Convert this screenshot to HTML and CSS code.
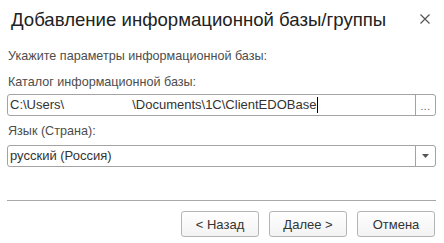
FILE: index.html
```html
<!DOCTYPE html>
<html lang="ru">
<head>
<meta charset="utf-8">
<link rel="stylesheet" href="styles.css">
</head>
<body>
<div class="dialog">
  <div class="header">
    <div class="title">Добавление информационной базы/группы</div>
    <svg class="close" width="10" height="10" viewBox="0 0 10 10"><path d="M0.5 0.5 L9.5 9.5 M9.5 0.5 L0.5 9.5" stroke="#555" stroke-width="1.2" fill="none"/></svg>
  </div>
  <div class="content">
    <div class="hint">Укажите параметры информационной базы:</div>
    <div class="label label-first">Каталог информационной базы:</div>
    <div class="field">
      <div class="field-text">C:\Users\<span class="masked"></span>\Documents\1C\ClientEDOBase<span class="caret"></span></div>
      <div class="field-btn"><span class="dots">...</span></div>
    </div>
    <div class="label">Язык (Страна):</div>
    <div class="field field-select">
      <div class="field-text">русский (Россия)</div>
      <div class="field-btn"><svg width="7" height="4" viewBox="0 0 7 4"><path d="M0 0 H7 L3.5 4 Z" fill="#555"/></svg></div>
    </div>
  </div>
  <div class="divider"></div>
  <div class="buttons">
    <button class="btn">&lt; Назад</button>
    <button class="btn">Далее &gt;</button>
    <button class="btn">Отмена</button>
  </div>
</div>
</body>
</html>
```
FILE: styles.css
```css
* { box-sizing: border-box; }
html, body { margin: 0; padding: 0; background: #fff; }
body { font-family: "Liberation Sans", Arial, sans-serif; color: #4d4d4d; }
.dialog { width: 444px; height: 243px; background: #fff; position: relative; }
.header { height: 38px; display: flex; align-items: center; justify-content: space-between; padding: 0 14px 0 11px; }
.title { font-size: 18.6px; color: #222; line-height: 22px; padding-top: 1px; }
.close { display: block; margin-top: 0; }
.content { padding: 10px 8px 0 7px; }
.hint, .label { font-size: 12.6px; line-height: 16px; padding-left: 1px; }
.label { margin-top: 7px; }
.label-first { margin-top: 10px; }
.field { margin-top: 4px; height: 22px; border: 1px solid #a3a3a3; border-radius: 3px; display: flex; background: #fff; }
.field-select { margin-top: 6px; }
.field-text { flex: 1; font-size: 13px; line-height: 20px; color: #333; padding-left: 2px; white-space: nowrap; overflow: hidden; display: flex; align-items: center; }
.masked { display: inline-block; width: 68px; }
.caret { display: inline-block; width: 1px; height: 16px; background: #000; margin-left: 1px; }
.field-btn { width: 20px; border-left: 1px solid #a3a3a3; display: flex; align-items: center; justify-content: center; }
.dots { font-size: 10px; color: #555; line-height: 10px; margin-top: 3px; letter-spacing: 0.5px; }
.divider { margin: 33px 8px 0 7px; height: 1px; background: #a8a8a8; }
.buttons { display: flex; justify-content: flex-end; gap: 10px; padding: 10px 9px 0 0; }
.btn { width: 78px; height: 26px; border: 1px solid #b5b5b5; border-radius: 3px; background: linear-gradient(#ffffff, #f3f3f3); font-family: "Liberation Sans", Arial, sans-serif; font-size: 13px; color: #333; padding: 0; }
```
